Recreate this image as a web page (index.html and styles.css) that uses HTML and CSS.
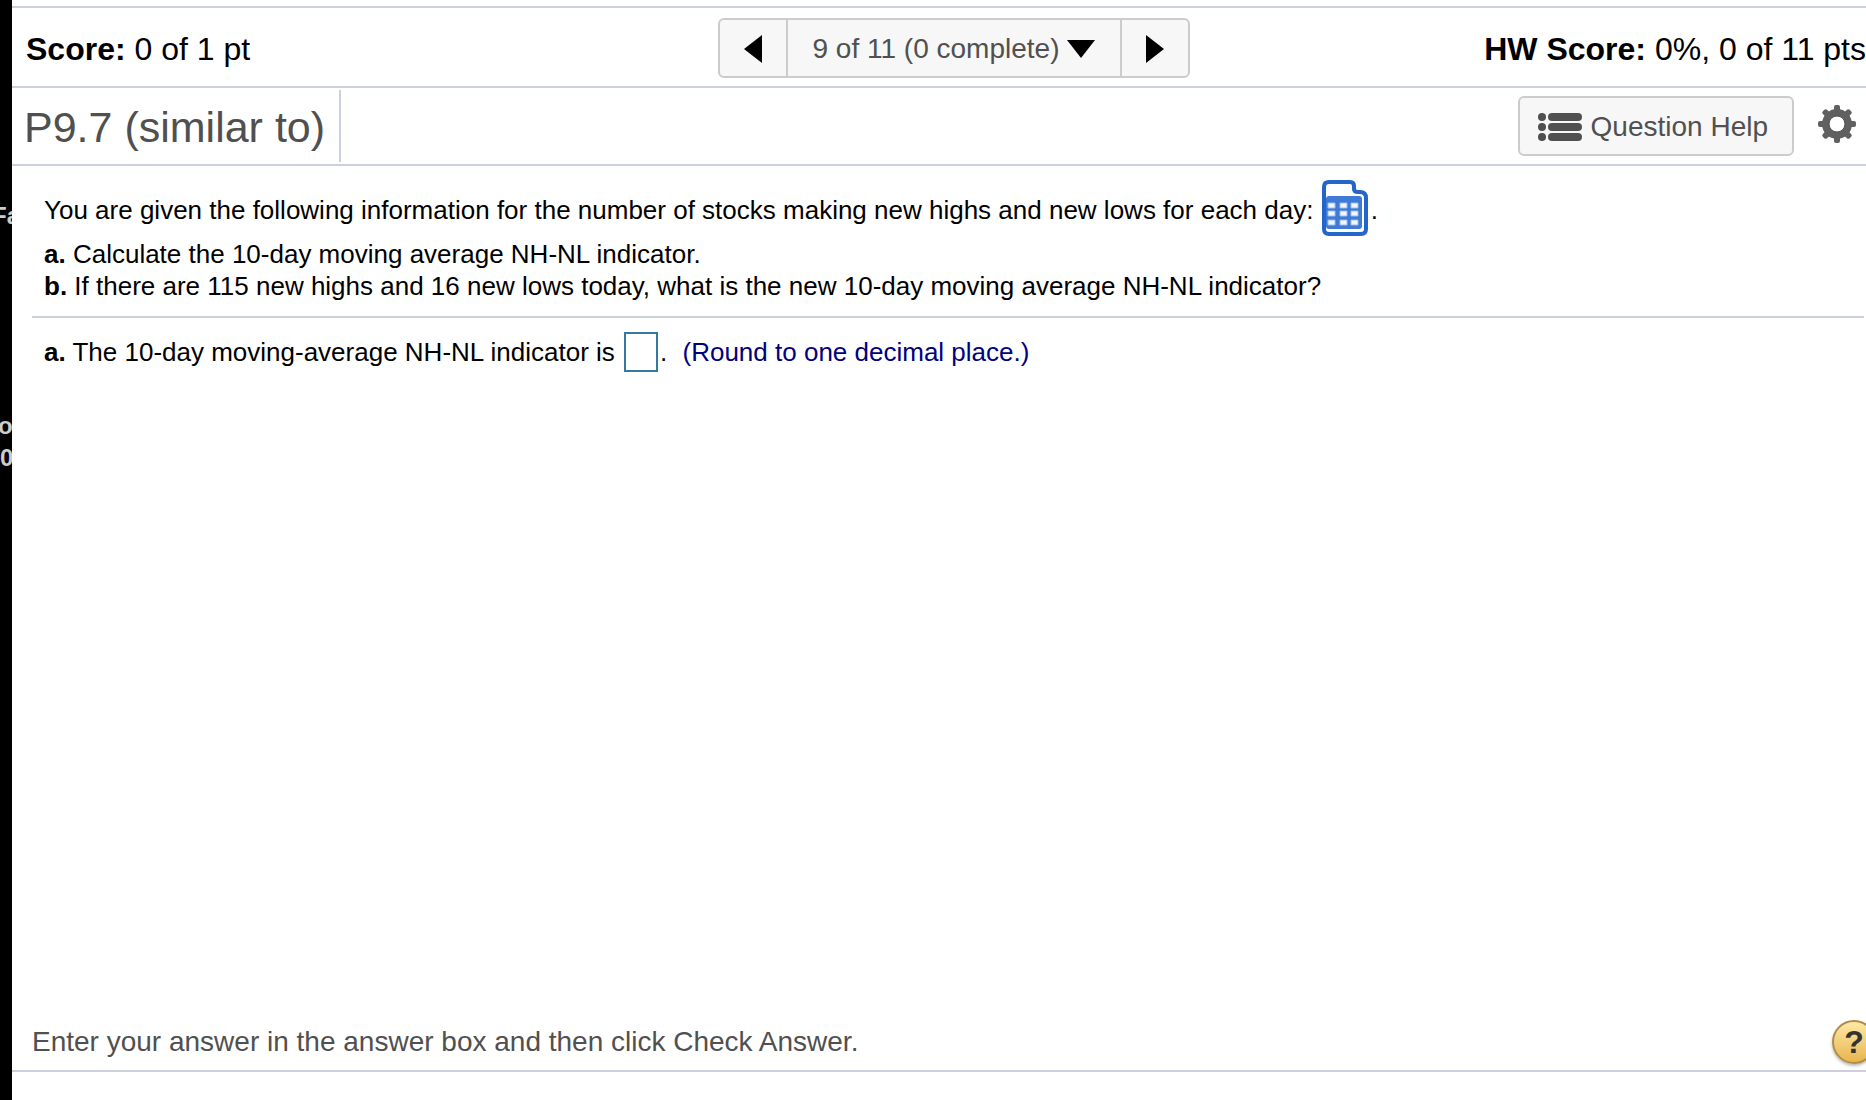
FILE: index.html
```html
<!DOCTYPE html>
<html lang="en">
<head>
<meta charset="UTF-8" />
<meta name="viewport" content="width=device-width, initial-scale=1" />
<title>Homework - P9.7</title>
<link rel="stylesheet" href="styles.css">
</head>
<body>
  <aside class="backdrop">
    <span class="backdrop-fa">Fa</span>
    <span class="backdrop-o">o</span>
    <span class="backdrop-zero">0</span>
  </aside>

  <div class="player">
    <header class="score-bar">
      <div class="score"><b>Score:</b> 0 of 1 pt</div>
      <nav class="question-nav" aria-label="Questions">
        <button class="nav-btn" aria-label="Previous question">
          <svg width="18" height="28" viewBox="0 0 18 28"><path d="M18 0v28L0 14z"/></svg>
        </button>
        <button class="nav-btn nav-list">
          9 of 11 (0 complete)
          <svg width="28" height="18" viewBox="0 0 28 18"><path d="M0 0h28L14 18z"/></svg>
        </button>
        <button class="nav-btn" aria-label="Next question">
          <svg width="18" height="28" viewBox="0 0 18 28"><path d="M0 0v28l18-14z"/></svg>
        </button>
      </nav>
      <div class="score hw-score"><b>HW Score:</b> 0%, 0 of 11 pts</div>
    </header>

    <div class="title-bar">
      <h1>P9.7 (similar to)</h1>
      <button class="help-btn">
        <svg width="44" height="28" viewBox="0 0 44 28" fill="#505050">
          <path d="M4 0l4 4-4 4-4-4z"/><circle cx="4" cy="4" r="4"/><rect x="10" y="0" width="34" height="8" rx="4"/>
          <path d="M4 10l4 4-4 4-4-4z"/><circle cx="4" cy="14" r="4"/><rect x="10" y="10" width="34" height="8" rx="4"/>
          <path d="M4 20l4 4-4 4-4-4z"/><circle cx="4" cy="24" r="4"/><rect x="10" y="20" width="34" height="8" rx="4"/>
        </svg>
        Question Help
      </button>
      <button class="settings-btn" aria-label="Settings">
        <svg width="38" height="38" viewBox="-19 -19 38 38">
          <g fill="#606060">
            <g id="teeth"><rect x="-3" y="-19" width="6" height="38" rx="2"/><rect x="-19" y="-3" width="38" height="6" rx="2"/></g>
            <use href="#teeth" transform="rotate(45)"/>
            <circle r="15"/>
          </g>
          <circle r="8" fill="#fff" stroke="#505050"/>
        </svg>
      </button>
    </div>

    <main class="exercise">
      <section class="question">
        <p class="intro">You are given the following information for the number of stocks making new highs and new lows for each day:
          <button class="data-btn" aria-label="Open data table">
            <svg width="46" height="56" viewBox="0 0 46 56">
              <path d="M7 2h21q4 0 4 4v3q0 3 4 3h2q6 0 6 6v31q0 5-5 5H7q-5 0-5-5V7q0-5 5-5z" fill="#fff" stroke="#2365cb" stroke-width="4"/>
              <rect x="4" y="16" width="36" height="33" rx="3" fill="#3f7bd6"/>
              <path d="M6 23h7v5H6zM18 23h7v5h-7zM29 23h7v5h-7zM6 31h7v5H6zM18 31h7v5h-7zM29 31h7v5h-7zM6 40h7v5H6zM18 40h7v5h-7zM29 40h7v5h-7z" fill="#f3f7fd" stroke="#9dbdec" stroke-width="1"/>
            </svg></button>.</p>
        <p><b>a.</b> Calculate the 10-day moving average NH-NL indicator.</p>
        <p><b>b.</b> If there are 115 new highs and 16 new lows today, what is the new 10-day moving average NH-NL indicator?</p>
      </section>
      <section class="answer">
        <label for="answerA"><b>a.</b> The 10-day moving-average NH-NL indicator is</label>
        <input type="text" id="answerA" class="answer-box" />.
        <span class="hint">(Round to one decimal place.)</span>
      </section>
    </main>

    <footer class="instructions">
      <p>Enter your answer in the answer box and then click Check Answer.</p>
      <button class="round-help" aria-label="Help">?</button>
    </footer>
  </div>
</body>
</html>
```

FILE: styles.css
```css
* {
  box-sizing: border-box;
  margin: 0;
  padding: 0;
}
body {
  display: flex;
  min-height: 100vh;
  overflow-x: hidden;
  background: #fff;
  color: #000;
  font-family: "Liberation Sans", Arial, Helvetica, sans-serif;
  font-size: 26px;
  line-height: 32px;
}
button {
  font: inherit;
  color: inherit;
  background: none;
  border: none;
  cursor: pointer;
}
svg {
  display: block;
  flex-shrink: 0;
}

/* sliver of the page behind the player window */
.backdrop {
  width: 12px;
  flex-shrink: 0;
  overflow: hidden;
  background: #000;
  color: #ccc;
  font-size: 24px;
  font-weight: bold;
  padding-top: 200px;
}
.backdrop span {
  display: block;
}
.backdrop-fa {
  margin-left: -8px;
}
.backdrop-o {
  margin-top: 178px;
  margin-left: -2px;
}

.player {
  flex: 1;
  min-width: 0;
  display: flex;
  flex-direction: column;
  padding: 6px 0 28px;
}

/* score row */
.score-bar {
  display: grid;
  grid-template-columns: 1fr auto 1fr;
  align-items: center;
  height: 82px;
  padding: 2px 0 0 14px;
  border-top: 2px solid #ccd0de;
  border-bottom: 2px solid #ccd0de;
}
.score {
  padding-top: 2px;
  font-size: 32px;
  line-height: 40px;
  white-space: nowrap;
}
.hw-score {
  text-align: right;
}
.question-nav {
  display: flex;
  height: 60px;
  margin-left: 16px;
  border: 2px solid #ccc;
  border-radius: 6px;
  background: #f7f7f7;
  overflow: hidden;
}
.nav-btn {
  display: flex;
  align-items: center;
  justify-content: center;
  width: 66px;
  padding-top: 2px;
}
.nav-list {
  gap: 8px;
  width: 336px;
  border-left: 2px solid #ccc;
  border-right: 2px solid #ccc;
  color: #505050;
  font-size: 28px;
}
.nav-btn svg {
  fill: #000;
}

/* title row */
.title-bar {
  display: flex;
  align-items: center;
  height: 78px;
  padding: 2px 10px 2px 0;
  border-bottom: 2px solid #ccd0de;
}
h1 {
  height: 72px;
  padding: 0 14px 0 12px;
  border-right: 2px solid #ccd0de;
  color: #505050;
  font-size: 43px;
  font-weight: normal;
  line-height: 74px;
}
.help-btn {
  display: flex;
  align-items: center;
  gap: 9px;
  height: 60px;
  margin-left: auto;
  padding: 2px 24px 0 18px;
  border: 2px solid #ccc;
  border-radius: 6px;
  background: #f7f7f7;
  color: #505050;
  font-size: 28px;
}
.settings-btn {
  margin: 0 0 4px 24px;
}

/* exercise */
.exercise {
  flex: 1;
  padding: 14px 2px 0 20px;
}
.question {
  padding: 0 12px 14px;
  border-bottom: 2px solid #ccd0de;
}
.intro {
  margin-bottom: 2px;
}
.data-btn {
  margin: 0 3px 0 1px;
  vertical-align: -17px;
}
.answer {
  padding: 14px 12px;
}
.answer-box {
  width: 34px;
  height: 40px;
  margin: 0 2px;
  border: 2px solid #35799b;
  font: inherit;
  vertical-align: baseline;
}
.hint {
  margin-left: 8px;
  color: #000080;
}

/* bottom row */
.instructions {
  display: flex;
  align-items: center;
  justify-content: space-between;
  height: 60px;
  padding: 2px 0 0 20px;
  border-bottom: 2px solid #ccd0de;
  color: #505050;
  font-size: 28px;
}
.round-help {
  width: 44px;
  height: 44px;
  margin-right: -10px;
  border: 2px solid #ae8d45;
  border-radius: 50%;
  background: linear-gradient(#fde9a5, #e9b551);
  box-shadow: 0 2px 3px #bbb;
  color: #333;
  font-size: 32px;
  font-weight: bold;
}
```
